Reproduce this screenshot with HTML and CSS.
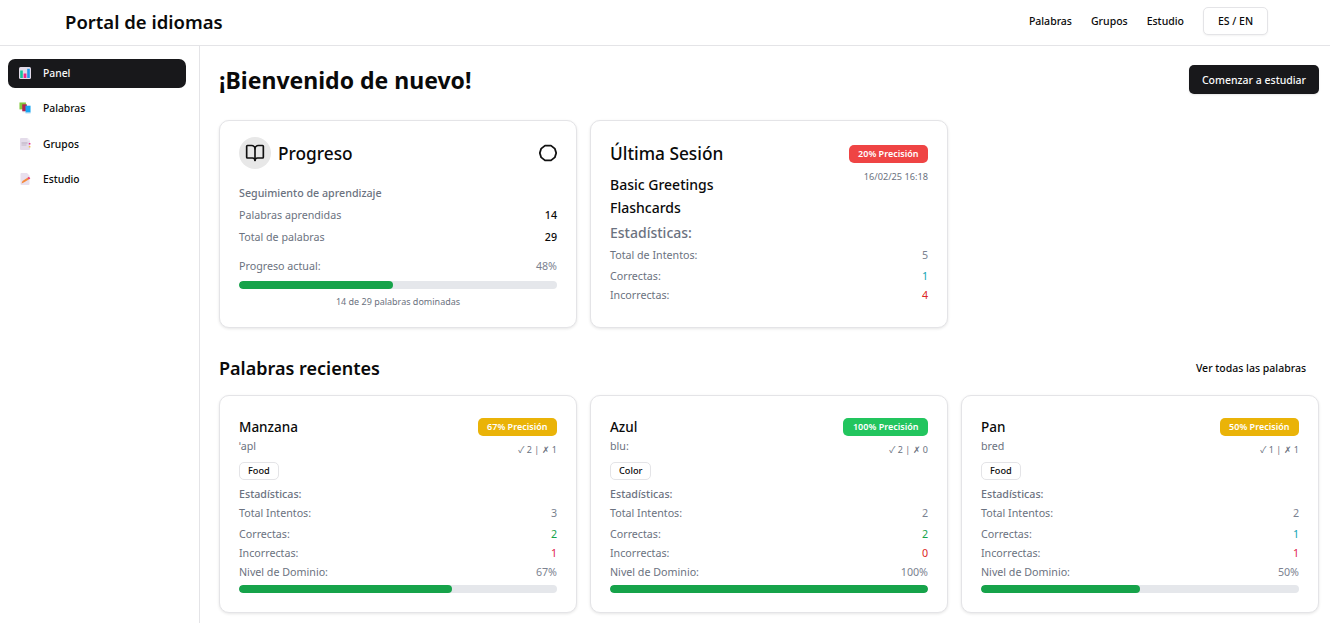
FILE: index.html
```html
<!DOCTYPE html>
<html lang="es">
<head>
<meta charset="utf-8">
<title>Portal de idiomas</title>
<link rel="stylesheet" href="styles.css">
</head>
<body>
<header class="topbar">
  <div class="brand">Portal de idiomas</div>
  <nav class="topnav">
    <a>Palabras</a><a>Grupos</a><a>Estudio</a>
    <button class="lang">ES / EN</button>
  </nav>
</header>
<div class="shell">
  <aside class="sidebar">
    <a class="side-item active">
      <svg class="side-icon" viewBox="0 0 12 12"><rect width="12" height="12" rx="1.500" fill="#e3dbe9"/><rect x="1.200" y="3.500" width="2.600" height="7.500" fill="#14c79b"/><rect x="4.600" y="6.500" width="2.800" height="4.500" fill="#f0288c"/><rect x="8.200" y="1.800" width="2.600" height="9.200" fill="#2398ea"/></svg>
      <span>Panel</span>
    </a>
    <a class="side-item">
      <svg class="side-icon" viewBox="0 0 13 13"><rect x="0.500" y="0.500" width="7" height="7.500" fill="#86c93f"/><rect x="3.500" y="2.500" width="5" height="7.500" fill="#b3264f"/><rect x="7" y="4" width="5.500" height="7.500" fill="#19a6f2"/><rect x="4" y="10" width="3" height="1" fill="#d8b9c6"/><rect x="7" y="11.500" width="5.500" height="1" fill="#bcdcf2"/></svg>
      <span>Palabras</span>
    </a>
    <a class="side-item">
      <svg class="side-icon" viewBox="0 0 12 12"><path d="M2 0h6.500L11 2.500V11a1 1 0 0 1-1 1H2a1 1 0 0 1-1-1V1a1 1 0 0 1 1-1z" fill="#e4dcea"/><path d="M8.500 0 11 2.500H8.500z" fill="#f3eef6"/><rect x="2.500" y="4.500" width="6" height="1" fill="#b5aabc"/><rect x="2.500" y="6.500" width="5" height="1" fill="#c2b8c8"/><rect x="9.800" y="5" width="1.600" height="1.500" fill="#e8308c"/><rect x="9.800" y="8" width="1.600" height="1.500" fill="#f2c14e"/></svg>
      <span>Grupos</span>
    </a>
    <a class="side-item">
      <svg class="side-icon" viewBox="0 0 12 12"><path d="M2.500 0h5.500l2.500 2.500V11a1 1 0 0 1-1 1h-7a1 1 0 0 1-1-1V1a1 1 0 0 1 .999-1z" fill="#e8e0ee"/><path d="M2.500 10.500l1-2.500 5-3.200 1.200 1.800-5 3z" fill="#f58a3c"/><path d="M8.500 4.800 10 3.800l1.300 1.800-1.600 1z" fill="#ee3a6c"/></svg>
      <span>Estudio</span>
    </a>
  </aside>
  <main class="main">
    <div class="page-head">
      <h1>¡Bienvenido de nuevo!</h1>
      <button class="primary">Comenzar a estudiar</button>
    </div>
    <section class="grid">
      <article class="card progress">
        <div class="progress-head">
          <div class="progress-title">
            <span class="round">
              <svg viewBox="0 0 24 24" width="20" height="20" fill="none" stroke="#111" stroke-width="2" stroke-linecap="round" stroke-linejoin="round"><path d="M12 7v14"/><path d="M3 18a1 1 0 0 1-1-1V4a1 1 0 0 1 1-1h5a4 4 0 0 1 4 4 4 4 0 0 1 4-4h5a1 1 0 0 1 1 1v13a1 1 0 0 1-1 1h-6a3 3 0 0 0-3 3 3 3 0 0 0-3-3z"/></svg>
            </span>
            <h2>Progreso</h2>
          </div>
          <svg class="ring" viewBox="0 0 18 18" width="18" height="18" fill="none" stroke="#111" stroke-width="1.800" stroke-linejoin="round"><path d="M6 1.600h6l3.800 3 1.400 4.400-1.400 4.400-3.800 3H6l-3.800-3L.8 9l1.400-4.400z"/></svg>
        </div>
        <div class="muted strong sub">Seguimiento de aprendizaje</div>
        <div class="row r-a"><span class="muted">Palabras aprendidas</span><b>14</b></div>
        <div class="row r-b"><span class="muted">Total de palabras</span><b>29</b></div>
        <div class="row r-c"><span class="muted">Progreso actual:</span><span class="lite">48%</span></div>
        <div class="bar"><div class="fill" style="width:48.3%"></div></div>
        <div class="caption">14 de 29 palabras dominadas</div>
      </article>

      <article class="card session">
        <div class="session-head">
          <div>
            <h2>Última Sesión</h2>
            <div class="deck">Basic Greetings</div>
            <div class="deck second">Flashcards</div>
          </div>
          <div class="right">
            <span class="badge red">20% Precisión</span>
            <div class="date">16/02/25 16:18</div>
          </div>
        </div>
        <div class="stat-title">Estadísticas:</div>
        <div class="row s-a"><span class="muted">Total de Intentos:</span><span class="lite">5</span></div>
        <div class="row s-b"><span class="muted">Correctas:</span><span class="teal">1</span></div>
        <div class="row s-c"><span class="muted">Incorrectas:</span><span class="red-t">4</span></div>
      </article>
    </section>

    <div class="sec-head">
      <h3>Palabras recientes</h3>
      <a class="all">Ver todas las palabras</a>
    </div>

    <section class="grid">
      <article class="card word">
        <div class="word-head">
          <div><h4>Manzana</h4><div class="ipa">ˈapl</div></div>
          <div class="right"><span class="badge yellow">67% Precisión</span><div class="tally">✓ 2 | ✗ 1</div></div>
        </div>
        <span class="tag">Food</span>
        <div class="muted strong st">Estadísticas:</div>
        <div class="row w-a"><span class="muted">Total Intentos:</span><span class="lite">3</span></div>
        <div class="row w-b"><span class="muted">Correctas:</span><span class="green-t">2</span></div>
        <div class="row w-c"><span class="muted">Incorrectas:</span><span class="pink-t">1</span></div>
        <div class="row w-c"><span class="muted">Nivel de Dominio:</span><span class="lite">67%</span></div>
        <div class="bar w-bar"><div class="fill" style="width:67%"></div></div>
      </article>
      <article class="card word">
        <div class="word-head">
          <div><h4>Azul</h4><div class="ipa">blu:</div></div>
          <div class="right"><span class="badge green">100% Precisión</span><div class="tally">✓ 2 | ✗ 0</div></div>
        </div>
        <span class="tag">Color</span>
        <div class="muted strong st">Estadísticas:</div>
        <div class="row w-a"><span class="muted">Total Intentos:</span><span class="lite">2</span></div>
        <div class="row w-b"><span class="muted">Correctas:</span><span class="green-t">2</span></div>
        <div class="row w-c"><span class="muted">Incorrectas:</span><span class="red-t">0</span></div>
        <div class="row w-c"><span class="muted">Nivel de Dominio:</span><span class="lite">100%</span></div>
        <div class="bar w-bar"><div class="fill" style="width:100%"></div></div>
      </article>
      <article class="card word">
        <div class="word-head">
          <div><h4>Pan</h4><div class="ipa">bred</div></div>
          <div class="right"><span class="badge yellow">50% Precisión</span><div class="tally">✓ 1 | ✗ 1</div></div>
        </div>
        <span class="tag">Food</span>
        <div class="muted strong st">Estadísticas:</div>
        <div class="row w-a"><span class="muted">Total Intentos:</span><span class="lite">2</span></div>
        <div class="row w-b"><span class="muted">Correctas:</span><span class="teal">1</span></div>
        <div class="row w-c"><span class="muted">Incorrectas:</span><span class="pink-t">1</span></div>
        <div class="row w-c"><span class="muted">Nivel de Dominio:</span><span class="lite">50%</span></div>
        <div class="bar w-bar"><div class="fill" style="width:50%"></div></div>
      </article>
    </section>
  </main>
</div>
</body>
</html>
```

FILE: styles.css
```css
* { box-sizing: border-box; }
html, body { height: 100%; }
body {
  margin: 0;
  height: 623px;
  overflow: hidden;
  background: #fff;
  color: #0a0a0a;
  font-family: "Noto Sans", "Open Sans", sans-serif;
  font-size: 10.700px;
}
h1, h2, h3, h4 { margin: 0; }

.topbar {
  height: 46px;
  border-bottom: 1px solid #e4e4e7;
  display: flex;
  align-items: center;
  justify-content: space-between;
  padding: 0 62px 2px 65px;
}
.brand { font-size: 18.500px; font-weight: 600; }
.topnav { display: flex; align-items: center; gap: 19px; font-size: 10.500px; font-weight: 500; padding-bottom: 2px; }
.lang {
  width: 65px;
  height: 28px;
  background: #fff;
  border: 1px solid #e4e4e7;
  border-radius: 5px;
  font: inherit;
  color: inherit;
  box-shadow: 0 1px 2px rgba(0,0,0,.05);
}

.shell { display: flex; height: 577px; }
.sidebar {
  width: 200px;
  flex: none;
  border-right: 1px solid #e4e4e7;
  padding: 13px 13px 0 8px;
  display: flex;
  flex-direction: column;
  gap: 6.400px;
}
.side-item {
  height: 29px;
  display: flex;
  align-items: center;
  gap: 12px;
  padding: 0 0 1px 11px;
  border-radius: 7px;
  font-size: 10.300px;
  font-weight: 500;
}
.side-item.active { background: #18181b; color: #fafafa; }
.side-icon { width: 12px; height: 12px; flex: none; }

.main { flex: 1; padding: 0 11px 0 19px; min-width: 0; }
.page-head {
  height: 74px;
  display: flex;
  align-items: center;
  justify-content: space-between;
  padding-bottom: 7px;
}
h1 { font-size: 23px; font-weight: 700; }
.primary {
  width: 130px;
  height: 29px;
  background: #18181b;
  color: #fafafa;
  border: 0;
  border-radius: 5px;
  font: inherit;
  font-size: 10.500px;
  font-weight: 500;
  box-shadow: 0 1px 2px rgba(0,0,0,.1);
}

.grid { display: grid; grid-template-columns: repeat(3, 358px); gap: 13px; }
.card {
  border: 1px solid #e4e4e7;
  border-radius: 10px;
  background: #fff;
  box-shadow: 0 1px 3px rgba(0,0,0,.1);
  padding: 0 19px;
}
.muted { color: #6b7280; }
.strong { font-weight: 500; }
.lite { color: #7b8290; }
.row { display: flex; justify-content: space-between; align-items: center; }
.row b { font-weight: 500; }
.teal { color: #0ea5b5; }
.red-t { color: #dc2626; }
.green-t { color: #16a34a; }
.pink-t { color: #e11d48; }

.progress { height: 208px; }
.progress-head { display: flex; justify-content: space-between; align-items: center; padding-top: 15px; height: 49px; }
.progress-title { display: flex; align-items: center; gap: 7px; }
.round { width: 32px; height: 32px; border-radius: 50%; background: #e8e8e8; display: flex; align-items: center; justify-content: center; }
h2 { font-size: 17.300px; font-weight: 500; }
.sub { margin-top: 16px; height: 15px; line-height: 15px; }
.r-a { margin-top: 6px; height: 15px; }
.r-b { margin-top: 7px; height: 15px; }
.r-c { margin-top: 14px; height: 15px; }
.bar { height: 8px; background: #e5e7eb; border-radius: 4px; overflow: hidden; margin-top: 8px; }
.fill { height: 100%; background: #16a34a; border-radius: 4px; }
.caption { text-align: center; color: #6b7280; font-size: 9px; margin-top: 6px; }

.session { height: 208px; }
.session-head { display: flex; justify-content: space-between; padding-top: 20px; }
.session h2 { line-height: 26px; }
.deck { font-size: 14px; font-weight: 500; line-height: 19px; margin-top: 8px; }
.deck.second { margin-top: 4px; }
.right { display: flex; flex-direction: column; align-items: flex-end; }
.session .right { padding-top: 4px; }
.badge {
  height: 18px;
  padding: 0 9.500px;
  border-radius: 5px;
  color: #fff;
  font-size: 9px;
  font-weight: 600;
  line-height: 18px;
}
.red { background: #ef4444; }
.yellow { background: #eab308; }
.green { background: #22c55e; }
.date { color: #6b7280; font-size: 9.200px; margin-top: 7px; }
.stat-title { font-size: 14px; font-weight: 500; color: #6b7280; margin-top: 6px; line-height: 20px; }
.s-a { margin-top: 4px; height: 16px; }
.s-b { margin-top: 5px; height: 16px; }
.s-c { margin-top: 3px; height: 16px; }

.sec-head { display: flex; justify-content: space-between; align-items: center; height: 67px; padding: 12px 13px 0 0; }
h3 { font-size: 18px; font-weight: 600; }
.all { font-size: 10.500px; font-weight: 500; }

.word { height: 218px; }
.word-head { display: flex; justify-content: space-between; padding-top: 22px; }
h4 { font-size: 13.500px; font-weight: 500; line-height: 19px; }
.ipa { color: #6b7280; line-height: 15px; margin-top: 2px; }
.tally { color: #6b7280; font-size: 9px; margin-top: 7px; font-family: "Noto Sans", "Noto Sans CJK JP", sans-serif; }
.tag {
  display: inline-block;
  height: 18px;
  line-height: 16px;
  padding: 0 8px;
  border: 1px solid #e4e4e7;
  border-radius: 5px;
  font-size: 9.200px;
  font-weight: 500;
  margin-top: 6px;
}
.st { margin-top: 7px; line-height: 15px; }
.w-a { margin-top: 3px; height: 15px; }
.w-b { margin-top: 6px; height: 15px; }
.w-c { margin-top: 4px; height: 15px; }
.w-bar { margin-top: 6px; }
```
